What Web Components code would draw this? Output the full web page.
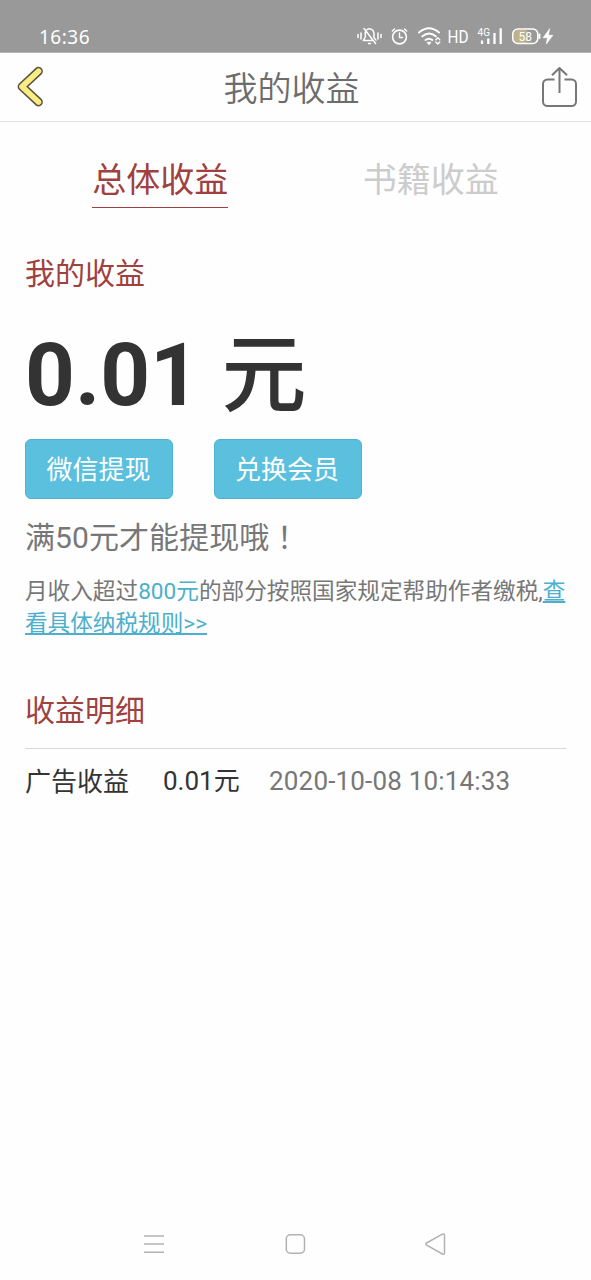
<!DOCTYPE html>
<html lang="zh-CN">
<head>
<meta charset="utf-8">
<title>我的收益</title>
<style>
html,body{margin:0;background:#fefefe}
body{font-family:Roboto,"Noto Sans CJK SC",sans-serif;width:591px;height:1280px;overflow:hidden}
</style>
</head>
<body>
<income-app></income-app>
<script>
const define = (name, html) => customElements.define(name, class extends HTMLElement {
  constructor() {
    super();
    const t = document.createElement('template');
    t.innerHTML = html;
    this.attachShadow({mode: 'open'}).appendChild(t.content.cloneNode(true));
  }
});

define('status-bar', `<style>
:host{display:flex;height:53px;box-sizing:border-box;background:#999;border-bottom:1px solid #b4b4b4;color:#fff;justify-content:space-between;padding:22px 36px 0 39px}
.time{font:19px/31px "Noto Sans",sans-serif;letter-spacing:.5px}
svg{display:block;width:200px;height:26px;flex:none}
</style>
<span class="time">16:36</span>
<svg viewBox="355 22 200 26" fill="none" stroke="#fff" stroke-width="1.6" stroke-linecap="round" stroke-linejoin="round">
<path d="M358 34.5v3M361 33v6M378 33v6M381 34.5v3M364 28.500l11.500 15M367 29.600c3-2 7 0 7 4v4l2 2.500M365.300 32v5l-2 3.500h8.500M368.500 43.500h2" stroke-width="1.5"/>
<circle cx="399.500" cy="37" r="6.900"/><path d="M399.500 33v4.500h3M392.300 31l2.200-2M406.700 31l-2.200-2" stroke-width="1.4"/>
<path d="M419 32.500q10-8.500 20 0M422.300 36.300q6.800-5.600 13.500 0M425.500 40q3.400-2.600 6.800 0" stroke-width="2"/><path d="M427.500 42.300h3.400l-1.700 2.200z" fill="#fff" stroke-width="1"/><path d="M435.800 39.800l2-2 2 2M435.800 42l2 2 2-2" stroke-width="1.300"/>
<text x="447.500" y="43" font-family="Roboto" font-size="17.500" fill="#fff" stroke="none" textLength="21" lengthAdjust="spacingAndGlyphs">HD</text>
<text x="477.500" y="36.300" font-family="Roboto" font-size="10.500" fill="#fff" stroke="none" textLength="12.500" lengthAdjust="spacingAndGlyphs">4G</text>
<path d="M482 40.500v3.500M488.300 38.500V44M494.500 33v11M500.700 28.300V44" stroke-width="2.300" stroke-linecap="butt"/>
<rect x="514" y="30" width="14" height="13" rx="4" fill="#bdb28b" stroke="none"/><rect x="512.800" y="29" width="25" height="14.500" rx="5"/><path d="M539.500 34.500v3.500" stroke-width="1.800"/>
<text x="518.500" y="40.600" font-family="Roboto" font-size="12" fill="#fff" stroke="none">58</text>
<path d="M549.500 29l-6.300 8.700h4.300l-1.200 6.300 6.500-8.700h-4.300z" fill="#fff" stroke-width=".7"/>
</svg>`);

define('nav-header', `<style>
:host{display:grid;grid-template-columns:60px 1fr 60px;height:69px;box-sizing:border-box;border-bottom:1px solid #e4e4e4;align-items:center;background:#fefefe}
h1{margin:0;font-size:34px;font-weight:350;line-height:50px;color:#6c6c6c;text-align:center;padding-top:4px;padding-right:8px}
svg{display:block;width:60px;height:68px}
</style>
<svg viewBox="0 53 60 68" fill="none" stroke-linecap="round" stroke-linejoin="round"><path d="M38.500 71.200L22 86.600 38.500 102" stroke="#5b5443" stroke-width="8.800"/><path d="M38.500 71.200L22 86.600 38.500 102" stroke="#f8ec83" stroke-width="5.600"/></svg>
<h1><slot></slot></h1>
<svg viewBox="531 53 60 68" fill="none" stroke="#777" stroke-width="2" stroke-linejoin="round"><path d="M554.500 79.500H547.500a4.500 4.500 0 0 0-4.500 4.500v17.500a4.500 4.500 0 0 0 4.500 4.500h24a4.500 4.500 0 0 0 4.500-4.500V84a4.500 4.500 0 0 0-4.500-4.500H564.500M559.500 93V68.500M552 75.300l7.500-7.300 7.500 7.300"/></svg>`);

define('tab-item', `<style>
:host{flex:1;display:flex;justify-content:center;color:#ccc}
span{font-size:34px;line-height:50px;height:52px;padding-top:1px;border-bottom:1px solid transparent}
:host([active]){color:#9e413f}
:host([active]) span{border-color:#9e413f}
</style><span><slot></slot></span>`);

define('section-title', `<style>:host{display:block;font-size:30px;line-height:40px;color:#9e413f}</style><slot></slot>`);

define('action-button', `<style>
:host{display:block;width:148px}
button{all:unset;box-sizing:border-box;display:block;width:148px;height:60px;border:1.500px solid #4cb3d0;border-radius:6px;background:#5bc0de;color:#fff;text-align:center;font-size:26px;line-height:60px;padding-right:1px}
</style><button><slot></slot></button>`);

define('income-row', `<style>
:host{display:flex;border-top:1px solid #d8d8d8;padding-top:12px;font-size:26px;line-height:40px;color:#333;white-space:nowrap}
.name{width:138px;padding-top:1px}.sum{width:106px}.date{color:#777;letter-spacing:.18px}
</style><span class="name"><slot name="name"></slot></span><span class="sum"><slot name="sum"></slot></span><span class="date"><slot name="date"></slot></span>`);

define('system-nav', `<style>:host{display:block}svg{display:block}</style>
<svg width="591" height="60" viewBox="0 1215 591 60" fill="none" stroke="#b2b2b2" stroke-width="1.500" stroke-linejoin="round"><path d="M144 1236h20M144 1244h20M144 1252.300h20"/><rect x="286.300" y="1234.800" width="18.200" height="18.500" rx="4.200"/><path d="M426.600 1243c-1.100.7-1.100 1.500 0 2.200l15.800 8.800c1.200.6 2.100.2 2.100-1.200v-17.400c0-1.400-.9-1.800-2.100-1.200z"/></svg>`);

define('income-app', `<style>
:host{display:flex;flex-direction:column;width:591px;height:1280px;background:#fefefe}
main{flex:1;padding:0 25px}
nav{display:flex;padding-top:32px;height:54px}
.first{margin-top:46px}
.amount{margin-top:31px;height:100px;font-size:87px;line-height:100px;font-weight:700;color:#333;white-space:pre}
.unit{font-weight:500;font-size:85px;line-height:0}
.actions{display:flex;gap:40.500px;margin-top:14px}
.hint{margin-top:19px;height:40px;font-size:30px;line-height:40px;color:#777;letter-spacing:.08px}
.mark{font-family:"Noto Sans CJK TC",sans-serif;line-height:0}
.note{margin-top:18px;font-size:22.640px;line-height:32px;color:#777;white-space:nowrap}
.note b{font-weight:400;color:#4bafcd}
.note a{color:#4bafcd;text-decoration:underline;text-decoration-thickness:2px;text-underline-offset:2px}
.detail{margin-top:51px}
income-row{margin-top:17px}
system-nav{margin-bottom:5px}
</style>
<status-bar></status-bar>
<nav-header>我的收益</nav-header>
<main>
<nav><tab-item active>总体收益</tab-item><tab-item>书籍收益</tab-item></nav>
<section-title class="first">我的收益</section-title>
<div class="amount">0.01 <span class="unit">元</span></div>
<div class="actions"><action-button>微信提现</action-button><action-button>兑换会员</action-button></div>
<div class="hint">满50元才能提现哦<span class="mark" lang="zh-TW">！</span></div>
<div class="note">月收入超过<b>800元</b>的部分按照国家规定帮助作者缴税,<a>查<br>看具体纳税规则&gt;&gt;</a></div>
<section-title class="detail">收益明细</section-title>
<income-row><span slot="name">广告收益</span><span slot="sum">0.01元</span><span slot="date">2020-10-08 10:14:33</span></income-row>
</main>
<system-nav></system-nav>`);
</script>
</body>
</html>
